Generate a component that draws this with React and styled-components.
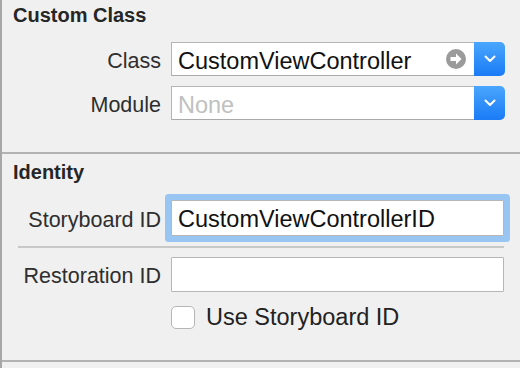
import React from "react";
import styled, { createGlobalStyle } from "styled-components";

const GlobalStyle = createGlobalStyle`
  body {
    margin: 0;
    background-color: #f0f0f0;
    font-family: "Liberation Sans", Arial, sans-serif;
  }
`;

const Panel = styled.div`
  width: 520px;
  height: 368px;
  box-sizing: border-box;
  border-left: 2px solid #a7a7a7;
  background-color: #f0f0f0;
  overflow: hidden;
`;

const Section = styled.section`
  height: ${(p) => p.$height}px;
  box-sizing: border-box;
  padding: ${(p) => p.$top}px 16px 0 0;
  border-bottom: 2px solid #b2b2b2;
`;

const Header = styled.div`
  padding-left: 11px;
  font-size: 20px;
  font-weight: bold;
  line-height: 24px;
  color: #262626;
`;

const Rows = styled.div`
  display: flex;
  flex-direction: column;
  gap: 10px;
  margin-top: ${(p) => p.$top}px;
`;

const Row = styled.div`
  display: grid;
  grid-template-columns: 159px 1fr;
  column-gap: 10px;
  align-items: center;
  margin-top: ${(p) => p.$top || 0}px;
`;

const Label = styled.label`
  padding-top: 4px;
  text-align: right;
  font-size: 21.5px;
  color: #2e2e2e;
  white-space: nowrap;
`;

const Combo = styled.div`
  display: flex;
  height: 34px;
  margin-right: -1px;
`;

const ComboField = styled.div`
  flex: 1;
  display: flex;
  align-items: center;
  box-sizing: border-box;
  padding: 0 8px 0 6px;
  background-color: #fff;
  border: 1px solid #b5b5b5;
  border-bottom-color: #a9a9a9;
  border-right: none;
  font-size: 23.5px;
  color: ${(p) => (p.$empty ? "#c0c0c0" : "#111")};
`;

const FieldText = styled.span`
  padding-top: 4px;
  white-space: nowrap;
`;

const GoIcon = styled.svg`
  margin-left: auto;
  flex-shrink: 0;
`;

const ComboButton = styled.div`
  width: 31px;
  display: flex;
  align-items: center;
  justify-content: center;
  border-radius: 0 5px 5px 0;
  background: linear-gradient(#4aa6fd, #1a7bf6);
`;

const TextField = styled.input`
  box-sizing: border-box;
  width: 100%;
  height: ${(p) => p.$height}px;
  margin: 0;
  padding: 3px 6px 0;
  background-color: #fff;
  border: 1px solid #b6b6b6;
  border-radius: 1px;
  outline: none;
  font-family: "Liberation Sans", Arial, sans-serif;
  font-size: 23.5px;
  color: #111;
  box-shadow: ${(p) => (p.$focused ? "0 0 0 6px #99c5f3" : "none")};
`;

const Divider = styled.div`
  height: 2px;
  margin: 10px 0 9px 16px;
  background-color: #c8c8c8;
`;

const CheckRow = styled.label`
  display: flex;
  align-items: center;
  gap: 11px;
  margin: 12px 0 0 169px;
  font-size: 23.5px;
  color: #222;
`;

const Box = styled.span`
  width: 24px;
  height: 23px;
  box-sizing: border-box;
  border: 1px solid #b6b6b6;
  border-radius: 5px;
  background-color: #fff;
`;

const Chevron = () => (
  <svg width="12" height="8" viewBox="0 0 12 8">
    <path d="M1.5 1.5 L6 6 L10.5 1.5" fill="none" stroke="#fff" strokeWidth="2" strokeLinecap="round" strokeLinejoin="round" />
  </svg>
);

const Go = () => (
  <GoIcon width="20" height="20" viewBox="0 0 20 20">
    <circle cx="10" cy="10" r="10" fill="#9b9b9b" />
    <path d="M4.5 8 H10 V4.5 L15.5 10 L10 15.5 V12 H4.5 Z" fill="#fff" />
  </GoIcon>
);

const App = () => {
  return (
    <Panel>
      <GlobalStyle />
      <Section $height={154} $top={3}>
        <Header>Custom Class</Header>
        <Rows $top={15}>
          <Row>
            <Label>Class</Label>
            <Combo>
              <ComboField>
                <FieldText>CustomViewController</FieldText>
                <Go />
              </ComboField>
              <ComboButton>
                <Chevron />
              </ComboButton>
            </Combo>
          </Row>
          <Row>
            <Label>Module</Label>
            <Combo>
              <ComboField $empty>
                <FieldText>None</FieldText>
              </ComboField>
              <ComboButton>
                <Chevron />
              </ComboButton>
            </Combo>
          </Row>
        </Rows>
      </Section>
      <Section $height={208} $top={6}>
        <Header>Identity</Header>
        <Row $top={16}>
          <Label>Storyboard ID</Label>
          <TextField $height={36} $focused readOnly value="CustomViewControllerID" />
        </Row>
        <Divider />
        <Row>
          <Label>Restoration ID</Label>
          <TextField $height={35} readOnly value="" />
        </Row>
        <CheckRow>
          <Box />
          Use Storyboard ID
        </CheckRow>
      </Section>
    </Panel>
  );
};

export default App;
